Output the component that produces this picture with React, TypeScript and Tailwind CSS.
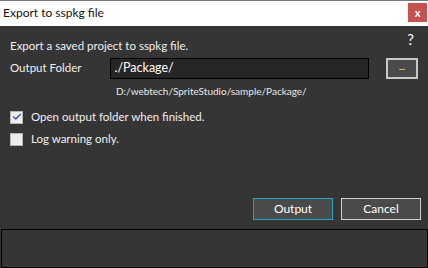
import { Check } from 'lucide-react';

const font = { fontFamily: 'Lato, "Open Sans", sans-serif' };

function Checkbox({ checked, label }: { checked: boolean; label: string }) {
  return (
    <div className="flex items-center gap-[8px] h-[13px]">
      <div className="w-[13px] h-[13px] border border-[#b4b4b4] bg-gradient-to-br from-[#e8e8e8] to-[#f4f4f4] flex items-center justify-center">
        {checked && <Check size={10} strokeWidth={3.5} className="text-[#3f4fa8]" />}
      </div>
      <span className="text-[11.5px] text-[#f0f0f0] leading-none">{label}</span>
    </div>
  );
}

export default function App() {
  return (
    <div className="w-[428px] h-[268px] bg-[#353535] flex flex-col border-t border-[#777777] overflow-hidden" style={font}>
      <div className="h-[25px] bg-white flex items-center justify-between shrink-0">
        <span className="pl-[3px] text-[12px] text-[#111111] -mt-[1px]">Export to sspkg file</span>
        <div className="w-[19px] h-[19px] bg-[#c75050] mr-[1px] -mt-[2px] flex items-center justify-center">
          <span className="text-white text-[11px] font-bold leading-none -mt-[1px]">x</span>
        </div>
      </div>

      <div className="flex-1 flex flex-col px-[10px] relative">
        <span className="absolute right-[14px] top-[6px] text-[15px] text-white leading-none">?</span>
        <div className="text-[11.5px] text-[#f0f0f0] mt-[14px] leading-none">Export a saved project to sspkg file.</div>

        <div className="flex items-center mt-[6px] h-[21px]">
          <span className="w-[101px] text-[11.5px] text-[#f0f0f0] leading-none">Output Folder</span>
          <div className="w-[260px] h-[21px] bg-[#262626] border border-black flex items-center pl-[3px]">
            <span className="text-[12.5px] text-white leading-none">./Package/</span>
          </div>
          <div className="ml-[17px] w-[32px] h-[21px] bg-[#4a4a4a] border-2 border-[#c8c8c8] flex items-center justify-center">
            <span className="text-[9px] text-white leading-none -mt-[3px]">...</span>
          </div>
        </div>

        <div className="text-[10px] text-[#e8e8e8] mt-[7px] ml-[106px] leading-none">D:/webtech/SpriteStudio/sample/Package/</div>

        <div className="mt-[15px] flex flex-col gap-[9px]">
          <Checkbox checked label="Open output folder when finished." />
          <Checkbox checked={false} label="Log warning only." />
        </div>

        <div className="flex justify-end gap-[8px] mt-auto mb-[9px] mr-[-3px]">
          <div className="w-[80px] h-[22px] bg-[#4a4a4a] border border-[#1ba7c9] flex items-center justify-center">
            <span className="text-[12px] text-white leading-none">Output</span>
          </div>
          <div className="w-[80px] h-[22px] bg-[#4a4a4a] border border-[#d0d0d0] flex items-center justify-center">
            <span className="text-[12px] text-white leading-none">Cancel</span>
          </div>
        </div>
      </div>

      <div className="h-[39px] shrink-0 bg-[#353535] border border-black ml-[1px]" />
    </div>
  );
}
